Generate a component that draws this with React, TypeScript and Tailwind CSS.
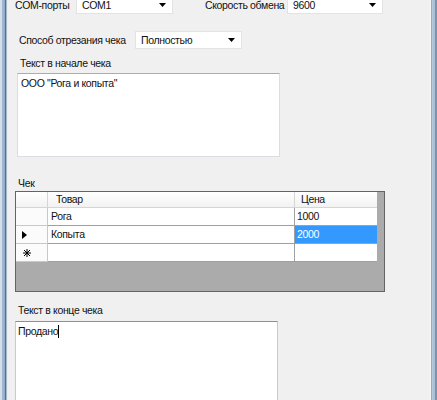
import React from "react";

function Arrow() {
  return (
    <svg width="7" height="4" viewBox="0 0 7 4" className="absolute right-[6px] top-1/2 -translate-y-1/2">
      <polygon points="0,0 7,0 3.5,4" fill="#000" />
    </svg>
  );
}

function Combo({ w, text }: { w: string; text: string }) {
  return (
    <div className={`relative h-[18px] ${w} bg-white border border-[#e3e3e3] flex items-center pl-[5px] shrink-0`}>
      <span>{text}</span>
      <Arrow />
    </div>
  );
}

export default function App() {
  return (
    <div
      className="w-[437px] h-[400px] overflow-hidden flex bg-[#f0f0f0] text-[10.5px] tracking-[-0.35px] leading-[13px] text-[#111] whitespace-nowrap"
      style={{ fontFamily: '"Liberation Sans", Arial, sans-serif' }}
    >
      <div className="w-[8px] h-full shrink-0 bg-[linear-gradient(to_right,#d5dfea_0px,#d5dfea_2px,#a3bad3_2px,#93adc9_5px,#5d6f84_5px,#5d6f84_6px,#a9b9c9_6px,#a9b9c9_7px,#e9eef3_7px)]" />
      <div className="flex-1 flex flex-col">
        {/* Row 1 */}
        <div className="mt-[-4px] flex items-center shrink-0">
          <span className="ml-[7px] w-[61px]">COM-порты</span>
          <Combo w="w-[97px]" text="COM1" />
          <span className="ml-[32px] w-[82px]">Скорость обмена</span>
          <Combo w="w-[96px]" text="9600" />
        </div>
        {/* Row 2 */}
        <div className="mt-[17px] flex items-center shrink-0">
          <span className="ml-[11px] w-[116px]">Способ отрезания чека</span>
          <Combo w="w-[107px]" text="Полностью" />
        </div>
        {/* Text at start */}
        <span className="mt-[8px] ml-[12px] shrink-0">Текст в начале чека</span>
        <div className="mt-[3px] ml-[9px] w-[263px] h-[84px] shrink-0 bg-white border border-[#dadde3] border-t-[#abadb3] pl-[3px] pt-[3px]">
          ООО "Рога и копыта"
        </div>
        {/* Grid */}
        <span className="mt-[20px] ml-[10px] shrink-0">Чек</span>
        <div className="mt-[1px] ml-[7px] w-[370px] h-[101px] shrink-0 border border-[#646464] bg-[#ababab] flex flex-col">
          {/* header */}
          <div className="flex h-[16px] shrink-0">
            <div className="w-[32px] h-full bg-[linear-gradient(#ffffff,#f2f2f2)] border-r border-b border-[#d5d5d5]" />
            <div className="w-[247px] h-full bg-[linear-gradient(#ffffff,#f2f2f2)] border-r border-b border-[#d5d5d5] pl-[8px] flex items-center">Товар</div>
            <div className="w-[82px] h-full bg-[linear-gradient(#ffffff,#f2f2f2)] border-b border-[#d5d5d5] pl-[6px] flex items-center">Цена</div>
          </div>
          {[
            { a: "Рога", b: "1000", sel: false, mark: "" },
            { a: "Копыта", b: "2000", sel: true, mark: "arrow" },
            { a: "", b: "", sel: false, mark: "star" },
          ].map((r, i) => (
            <div key={i} className="flex h-[18px] shrink-0">
              <div className="w-[32px] h-full bg-[#fbfbfb] border-r border-b border-[#c8c8c8] flex items-center pl-[6px]">
                {r.mark === "arrow" && (
                  <svg width="5" height="8" viewBox="0 0 5 8">
                    <polygon points="0,0 5,4 0,8" fill="#000" />
                  </svg>
                )}
                {r.mark === "star" && (
                  <svg width="8" height="8" viewBox="0 0 8 8" className="ml-[1px]">
                    <g stroke="#000" strokeWidth="1">
                      <line x1="4" y1="0" x2="4" y2="8" />
                      <line x1="0" y1="4" x2="8" y2="4" />
                      <line x1="1" y1="1" x2="7" y2="7" />
                      <line x1="7" y1="1" x2="1" y2="7" />
                    </g>
                  </svg>
                )}
              </div>
              <div className="w-[247px] h-full bg-white border-r border-b border-[#a0a0a0] pl-[3px] flex items-center">{r.a}</div>
              <div className={`w-[82px] h-full border-b border-[#a0a0a0] pl-[2px] flex items-center ${r.sel ? "bg-[#3399ff] text-white" : "bg-white"}`}>{r.b}</div>
            </div>
          ))}
        </div>
        {/* Text at end */}
        <span className="mt-[12px] ml-[10px] shrink-0">Текст в конце чека</span>
        <div className="mt-[4px] ml-[7px] w-[263px] h-[100px] shrink-0 bg-white border border-[#b5cfe7] border-t-[#569de5] pl-[2px] pt-[3px] flex items-start">
          <span>Продано</span>
          <span className="inline-block w-[1px] h-[13px] bg-black" />
        </div>
      </div>
      <div className="w-[7px] h-full shrink-0 bg-[linear-gradient(to_right,#f7f7f7_0px,#f7f7f7_1px,#9fa9b4_1px,#9fa9b4_2px,#b8c9da_2px,#a5bcd4_5px,#7d93ab_5px)]" />
    </div>
  );
}
